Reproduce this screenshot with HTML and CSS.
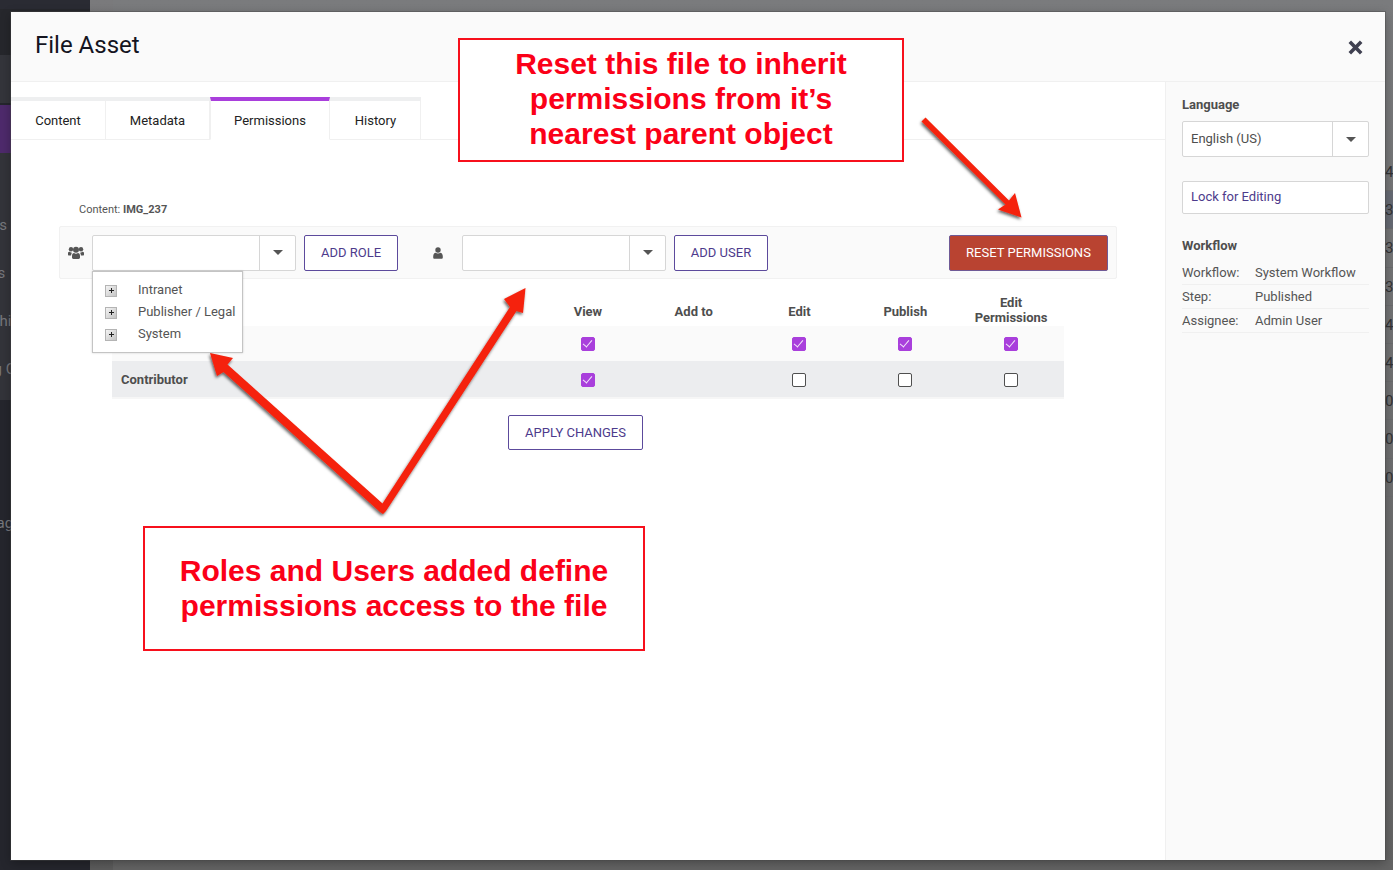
FILE: index.html
```html
<!DOCTYPE html>
<html lang="en">
<head>
<meta charset="utf-8">
<title>File Asset</title>
<link rel="stylesheet" href="styles.css">
</head>
<body>
<div class="page">
  <div class="backdrop">
    <nav class="bg-nav">
      <div class="bg-top"></div>
      <div class="bg-logo"></div>
      <div class="bg-active"></div>
      <div class="bg-group">
        <div class="bg-item shift-a">Assets</div>
        <div class="bg-item shift-b">Sites</div>
        <div class="bg-item shift-c">Archi</div>
        <div class="bg-item shift-d">Blog C</div>
      </div>
      <div class="bg-lower"><div class="bg-item shift-e">Manag</div></div>
    </nav>
    <div class="bg-strip"></div>
    <div class="bg-main">
      <div class="bg-row bg-first">42</div>
      <div class="bg-row bg-selected">38</div>
      <div class="bg-row">34</div>
      <div class="bg-row">34</div>
      <div class="bg-row">40</div>
      <div class="bg-row">41</div>
      <div class="bg-row">06</div>
      <div class="bg-row">05</div>
      <div class="bg-row">05</div>
    </div>
  </div>

  <div class="overlay">
    <div class="modal">
      <header class="modal-head">
        <h1 class="modal-title">File Asset</h1>
        <svg class="close" viewBox="0 0 12 12" aria-label="Close"><path d="M1.6 3.2 3.2 1.6 6 4.4 8.8 1.6l1.6 1.6L7.6 6l2.8 2.8-1.6 1.6L6 7.6l-2.8 2.8-1.6-1.6L4.400 6z"/></svg>
      </header>
      <div class="modal-body">
        <main class="main">
          <div class="tabs">
            <div class="tab tab-content">Content</div>
            <div class="tab tab-meta">Metadata</div>
            <div class="tab tab-perm active">Permissions</div>
            <div class="tab tab-hist">History</div>
          </div>
          <div class="perm">
            <div class="crumb">Content: <b>IMG_237</b></div>
            <div class="toolbar">
              <svg class="ico-users" viewBox="0 0 16 14"><circle cx="3" cy="3.300" r="2.200"/><circle cx="13" cy="3.300" r="2.200"/><circle cx="8" cy="3.800" r="3"/><path d="M0 6.700C.3 6 1 5.800 1.800 5.800c.6.600 1.300 1 2.200 1-.6.800-.9 1.800-.9 2.800H1C.3 9.600 0 9.200 0 8.500zM16 6.700c-.3-.7-1-.9-1.800-.9-.6.600-1.300 1-2.200 1 .6.800.9 1.800.9 2.800H15c.7 0 1-.4 1-1.100zM4 10c0-1.700.8-3 2.100-3 .5.500 1.100.8 1.900.8s1.400-.3 1.900-.8C11.200 7 12 8.300 12 10v1.600c0 .9-.6 1.400-1.400 1.400H5.400C4.600 13 4 12.500 4 11.600z"/></svg>
              <div class="combo-wrap">
                <div class="combo"><span class="combo-field"></span><span class="combo-btn"><i class="caret"></i></span></div>
                <div class="tree">
                  <div class="tree-item"><span class="plus"></span>Intranet</div>
                  <div class="tree-item"><span class="plus"></span>Publisher / Legal</div>
                  <div class="tree-item"><span class="plus"></span>System</div>
                </div>
              </div>
              <button class="btn btn-role">ADD ROLE</button>
              <svg class="ico-user" viewBox="0 0 10 12"><circle cx="5" cy="3" r="2.700"/><path d="M.2 9.500C.2 7.500 1.200 6 2.600 5.800c.6.500 1.400.8 2.400.8s1.800-.3 2.400-.8C8.800 6 9.800 7.500 9.800 9.500v.9c0 .8-.5 1.300-1.300 1.300h-7C.7 11.700.2 11.200.2 10.400z"/></svg>
              <div class="combo"><span class="combo-field"></span><span class="combo-btn"><i class="caret"></i></span></div>
              <button class="btn btn-user">ADD USER</button>
              <button class="btn btn-reset">RESET PERMISSIONS</button>
            </div>
            <div class="grid">
              <div class="g-head g-name"></div>
              <div class="g-head">View</div>
              <div class="g-head">Add to</div>
              <div class="g-head">Edit</div>
              <div class="g-head">Publish</div>
              <div class="g-head g-head-two">Edit<br>Permissions</div>

              <div class="g-cell g-name r1"></div>
              <div class="g-cell r1"><span class="cb on"></span></div>
              <div class="g-cell r1"></div>
              <div class="g-cell r1"><span class="cb on"></span></div>
              <div class="g-cell r1"><span class="cb on"></span></div>
              <div class="g-cell r1"><span class="cb on"></span></div>

              <div class="g-cell g-name r2">Contributor</div>
              <div class="g-cell r2"><span class="cb on"></span></div>
              <div class="g-cell r2"></div>
              <div class="g-cell r2"><span class="cb"></span></div>
              <div class="g-cell r2"><span class="cb"></span></div>
              <div class="g-cell r2"><span class="cb"></span></div>
            </div>
            <div class="apply-row"><button class="btn btn-apply">APPLY CHANGES</button></div>
          </div>
        </main>
        <aside class="side">
          <div class="side-label">Language</div>
          <div class="combo combo-lang"><span class="combo-field">English (US)</span><span class="combo-btn"><i class="caret"></i></span></div>
          <button class="lock">Lock for Editing</button>
          <div class="side-label wf-label">Workflow</div>
          <div class="wf-row"><span class="wf-key">Workflow:</span><span>System Workflow</span></div>
          <div class="wf-row"><span class="wf-key">Step:</span><span>Published</span></div>
          <div class="wf-row"><span class="wf-key">Assignee:</span><span>Admin User</span></div>
        </aside>
      </div>
    </div>
  </div>

  <svg class="arrows" viewBox="0 0 1393 870" width="1393" height="870">
    <defs>
      <filter id="sh" x="-20%" y="-20%" width="140%" height="140%"><feDropShadow dx="-1" dy="2" stdDeviation="1.600" flood-color="#000" flood-opacity=".6"/></filter>
    </defs>
    <g class="arrow-shape" filter="url(#sh)">
      <path d="M921.500 121.500 925.500 117.500 1009 200.500 1015 193 1021.500 217.500 998 209.500 1005.500 204.500z"/>
      <path d="M380 512 223.500 372 217 376 210 353 233 358 227.500 364.500 382.500 503.500 510 307 504 299 525.500 288 523 313 516.500 311 386 511 383 514z"/>
    </g>
  </svg>

  <div class="note note-reset">Reset this file to inherit<br>permissions from it’s<br>nearest parent object</div>
  <div class="note note-roles">Roles and Users added define<br>permissions access to the file</div>
</div>
</body>
</html>
```
FILE: styles.css
```css
* { box-sizing: border-box; }
html, body { margin: 0; padding: 0; }
body { font-family: Roboto, "Liberation Sans", sans-serif; color: #4a4a4a; }
.page { position: relative; width: 1393px; height: 870px; overflow: hidden; }

/* dimmed page behind the modal */
.backdrop { display: flex; height: 100%; background: #666; }
.bg-nav { width: 90px; flex: none; display: flex; flex-direction: column; background: #25262d; font-size: 15px; color: #77787d; }
.bg-top { height: 9px; background: #2a2b33; }
.bg-logo { height: 46px; background: #26272c; }
.bg-active { margin-top: 50px; height: 48px; background: #4e2a6c; }
.bg-logo + .bg-active { box-shadow: 0 -50px 0 #34353b; }
.bg-group { height: 247px; background: #33343a; padding-top: 48px; }
.bg-item { height: 48px; line-height: 48px; white-space: nowrap; overflow: hidden; }
.shift-a { text-indent: -39px; }
.shift-b { text-indent: -28px; }
.shift-c { text-indent: -23px; }
.shift-d { text-indent: -28px; }
.shift-e { text-indent: -33px; }
.bg-lower { padding-top: 99px; }
.bg-strip { width: 23px; flex: none; background: linear-gradient(#7a7a7c, #5c5c5c); }
.bg-main { flex: 1; min-width: 0; background: linear-gradient(#7a7b7d, #646464); padding-top: 153px; font-size: 15px; color: #333335; }
.bg-row { height: 38.200px; line-height: 38px; padding-left: 1272px; border-bottom: 1px solid #6b6c6e; white-space: nowrap; overflow: hidden; }
.bg-selected { background: #666a73; }

/* modal */
.overlay { position: absolute; inset: 0; padding: 12px 8px 10px 11px; }
.modal { height: 100%; display: flex; flex-direction: column; background: #fff; box-shadow: 0 0 0 1px rgba(70,70,70,.4), 0 3px 10px rgba(0,0,0,.3); }
.modal-head { height: 70px; flex: none; display: flex; justify-content: space-between; background: #fafafa; border-bottom: 1px solid #f0f0f0; padding: 0 20px 0 24px; }
.modal-title { margin: 17px 0 0; font-size: 24px; line-height: 32px; font-weight: 400; color: #14141f; }
.close { width: 19px; height: 19px; margin-top: 26px; fill: #3f4050; }
.modal-body { flex: 1; display: flex; min-height: 0; }
.main { flex: 1; min-width: 0; padding-top: 15px; }

.tabs { display: flex; height: 43px; border-bottom: 1px solid #f0f0f0; font-size: 13px; color: #222; }
.tab { margin-bottom: -1px; height: 43px; border-top: 4px solid #eeeff0; border-right: 1px solid #f0f0f0; border-bottom: 1px solid #f0f0f0; text-align: center; line-height: 38px; padding-top: 1px; }
.tab-content { width: 95px; }
.tab-meta { width: 104px; }
.tab-perm { width: 120px; }
.tab-hist { width: 91px; padding-left: 1px; }
.tab.active { border-top-color: #a93fdc; border-bottom-color: #fff; border-left: 1px solid #f0f0f0; }

.perm { padding: 63px 48px 0; }
.crumb { font-size: 11px; line-height: 14px; margin-left: 20px; color: #555; }
.crumb b { font-weight: 700; }
.toolbar { margin-top: 9px; width: 1058px; height: 53px; display: flex; align-items: center; padding-left: 8px; background: #fafafa; border: 1px solid #f1f1f1; border-radius: 2px; }
.ico-users { width: 16px; height: 14px; fill: #555; flex: none; margin-right: 8px; }
.ico-user { width: 10px; height: 12px; fill: #555; flex: none; margin: 0 19px 0 35px; }
.combo-wrap { position: relative; flex: none; }
.combo { display: flex; width: 204px; height: 36px; background: #fff; border: 1px solid #d6d6d6; border-radius: 2px; flex: none; }
.combo-field { flex: 1; font-size: 13px; line-height: 33px; padding-left: 8px; color: #4a4a4a; }
.combo-btn { width: 36px; border-left: 1px solid #d6d6d6; display: flex; align-items: center; justify-content: center; }
.caret { width: 0; height: 0; border-left: 5px solid transparent; border-right: 5px solid transparent; border-top: 5px solid #555; }
.tree { position: absolute; left: 0; top: 100%; width: 151px; height: 82px; background: #fff; border: 1px solid #c4c4c4; box-shadow: 0 0 2px rgba(0,0,0,.18); padding-top: 7px; font-size: 13px; z-index: 2; white-space: nowrap; }
.tree-item { height: 22px; line-height: 22px; display: flex; align-items: center; padding-left: 12px; color: #555; }
.plus { position: relative; width: 12px; height: 12px; margin: 3px 21px 0 0; background: linear-gradient(135deg, #f4f4f4, #c4c4c4); border: 1px solid #b4b4b4; flex: none; }
.plus::before { content: ""; position: absolute; left: 3px; top: 4px; width: 5px; height: 1px; background: #222; }
.plus::after { content: ""; position: absolute; left: 5px; top: 2px; width: 1px; height: 5px; background: #222; }

.btn { font-family: inherit; font-size: 13px; height: 36px; background: #fff; color: #4d3b8c; border: 1px solid #5c4a9c; border-radius: 2px; padding: 0; flex: none; }
.btn-role { width: 94px; margin-left: 8px; }
.btn-user { width: 94px; margin-left: 8px; }
.btn-reset { width: 159px; margin-left: auto; margin-right: 8px; background: #b94331; color: #fff; border-color: #6f5a96; }

.grid { margin: 16px 0 0 53px; width: 952px; display: grid; grid-template-columns: 423px repeat(5, 105.800px); border-bottom: 2px solid #f6f6f6; }
.g-head { height: 31px; display: flex; align-items: flex-end; justify-content: center; text-align: center; font-size: 13px; line-height: 15px; font-weight: 700; color: #4e4e4e; padding-bottom: 7px; }
.g-head-two { padding-bottom: 1px; }
.g-cell { height: 35px; display: flex; align-items: center; justify-content: center; }
.g-name { justify-content: flex-start; padding-left: 9px; font-size: 13px; font-weight: 700; color: #4e4e4e; }
.r1 { background: #fafafa; padding-top: 1px; }
.r2 { background: #ecedef; height: 36px; padding-top: 1px; }
.g-name.r2 { padding-top: 0; }
.cb { position: relative; width: 14px; height: 14px; background: #fff; border: 1.500px solid #4f4f4f; border-radius: 2px; }
.cb.on { background: #a93fdc; border-color: #a93fdc; }
.cb.on::after { content: ""; position: absolute; left: 3px; top: 0; width: 4px; height: 8px; border-right: 1px solid #f3e5fa; border-bottom: 1px solid #f3e5fa; transform: rotate(40deg); }

.apply-row { margin-top: 16px; padding-left: 449px; }
.btn-apply { width: 135px; height: 35px; }

/* right panel */
.side { width: 220px; flex: none; background: #fafafa; border-left: 1px solid #f0f0f0; padding: 15px 16px 0; font-size: 13px; color: #555; }
.side-label { font-size: 13px; line-height: 15px; font-weight: 700; color: #4e4e4e; }
.combo-lang { width: 187px; margin-top: 9px; }
.combo-lang .combo-field { color: #4e4e4e; }
.lock { display: block; width: 187px; height: 33px; margin-top: 24px; background: #fff; border: 1px solid #d6d6d6; border-radius: 2px; font: inherit; color: #4d3b8c; text-align: left; padding: 0 8px 2px; }
.wf-label { margin-top: 24px; margin-bottom: 8px; }
.wf-row { display: flex; height: 24px; line-height: 24px; border-bottom: 1px solid #f0f0f0; }
.wf-key { width: 73px; }

/* annotations */
.arrows { position: absolute; left: 0; top: 0; pointer-events: none; }
.arrow-shape { fill: #f5200a; }
.note { position: absolute; display: flex; align-items: center; justify-content: center; text-align: center; background: #fff; border: 2px solid #f7101c; color: #fb0018; font-family: "Liberation Sans", Arial, sans-serif; font-weight: 700; font-size: 30px; line-height: 35px; }
.note-reset { left: 458px; top: 38px; width: 446px; height: 124px; padding-bottom: 4px; }
.note-roles { left: 143px; top: 526px; width: 502px; height: 125px; padding-bottom: 1px; }
```
